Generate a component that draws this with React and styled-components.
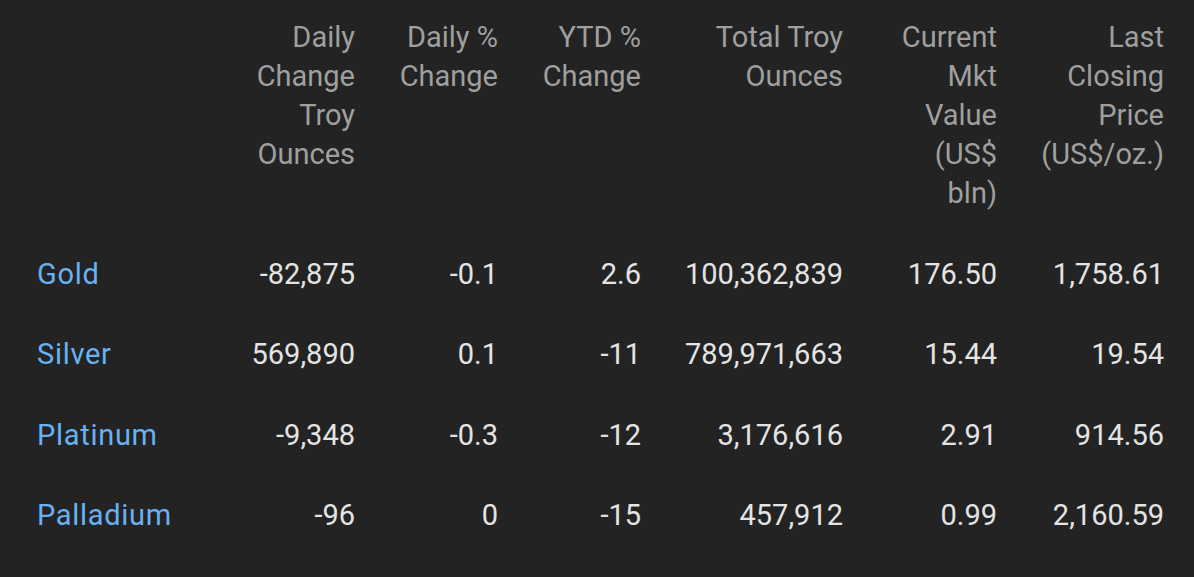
import React from "react";
import styled, { createGlobalStyle } from "styled-components";

const GlobalStyle = createGlobalStyle`
  html, body {
    margin: 0;
    padding: 0;
    background: #232323;
  }
  body {
    font-family: Roboto, "Noto Sans", sans-serif;
  }
`;

const COLS = "178px 140px 143px 143px 202px 154px 167px";

const Table = styled.div`
  width: 1194px;
  min-height: 577px;
  box-sizing: border-box;
  padding: 0 30px 0 37px;
  background: #232323;
  font-family: Roboto, "Noto Sans", sans-serif;
  font-size: 29px;
  line-height: 39px;
`;

const HeaderRow = styled.div`
  display: grid;
  grid-template-columns: ${COLS};
  padding: 18px 0 21px;
  color: #9f9f9f;
`;

const HeaderCell = styled.div`
  text-align: right;
  white-space: nowrap;
`;

const HeaderLine = styled.span`
  display: block;
`;

const DataRow = styled.div`
  display: grid;
  grid-template-columns: ${COLS};
  padding: 20.75px 0;
  color: #e4e4e4;
`;

const NameCell = styled.div`
  color: #68b2f4;
  text-align: left;
  white-space: nowrap;
  letter-spacing: 0.7px;
`;

const ValueCell = styled.div`
  text-align: right;
  white-space: nowrap;
`;

const headers = [
  ["Daily", "Change", "Troy", "Ounces"],
  ["Daily %", "Change"],
  ["YTD %", "Change"],
  ["Total Troy", "Ounces"],
  ["Current", "Mkt", "Value", "(US$", "bln)"],
  ["Last", "Closing", "Price", "(US$/oz.)"],
];

const rows = [
  ["Gold", "-82,875", "-0.1", "2.6", "100,362,839", "176.50", "1,758.61"],
  ["Silver", "569,890", "0.1", "-11", "789,971,663", "15.44", "19.54"],
  ["Platinum", "-9,348", "-0.3", "-12", "3,176,616", "2.91", "914.56"],
  ["Palladium", "-96", "0", "-15", "457,912", "0.99", "2,160.59"],
];

export default function App() {
  return (
    <>
      <GlobalStyle />
      <Table>
        <HeaderRow>
          <HeaderCell />
          {headers.map((lines, i) => (
            <HeaderCell key={i}>
              {lines.map((l) => (
                <HeaderLine key={l}>{l}</HeaderLine>
              ))}
            </HeaderCell>
          ))}
        </HeaderRow>
        {rows.map(([name, ...vals]) => (
          <DataRow key={name}>
            <NameCell>{name}</NameCell>
            {vals.map((v, i) => (
              <ValueCell key={i}>{v}</ValueCell>
            ))}
          </DataRow>
        ))}
      </Table>
    </>
  );
}
